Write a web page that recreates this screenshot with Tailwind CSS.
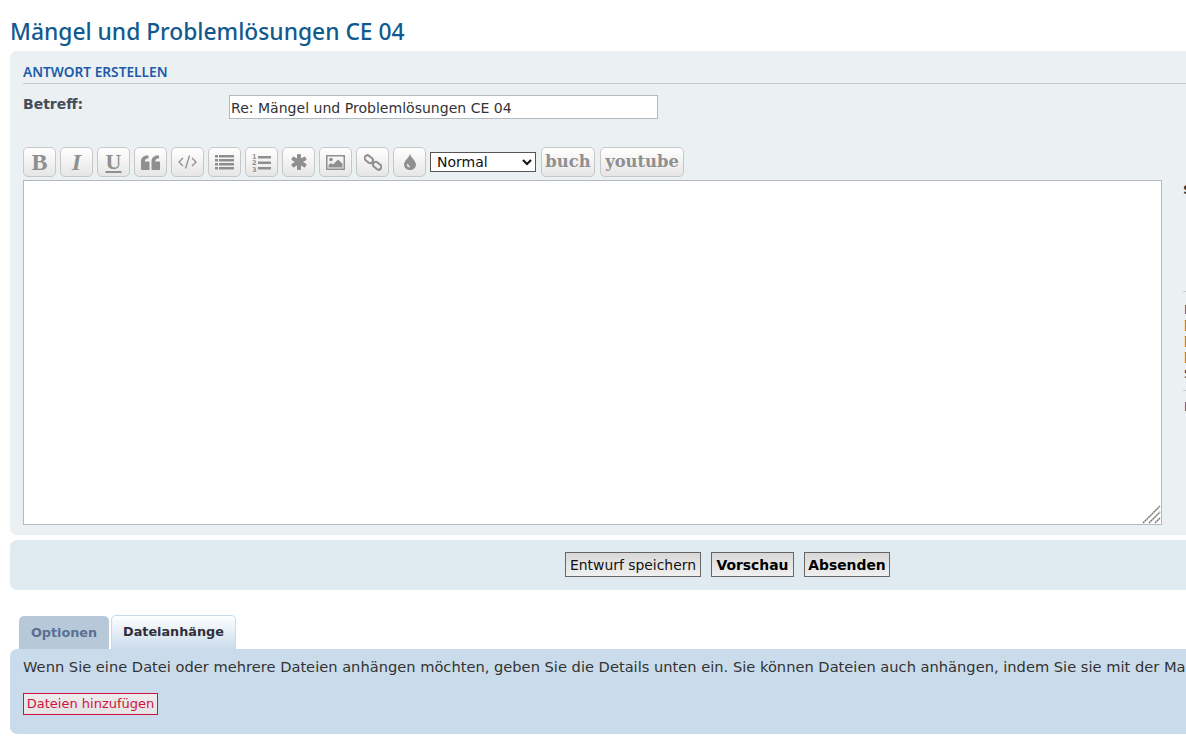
<!DOCTYPE html>
<html lang="de">
<head>
  <meta charset="UTF-8" />
  <title>Mängel und Problemlösungen CE 04</title>
  <script src="https://cdn.jsdelivr.net/npm/@tailwindcss/browser@4"></script>
</head>
<body class="bg-white overflow-hidden h-[736px] font-['DejaVu_Sans',sans-serif] text-[13px] text-[#333]">
<div class="w-[1500px] pl-[10px]">

  <!-- Title -->
  <h2 class="h-[51px] pt-[16px] text-[22.8px] leading-[32px] font-medium text-[#115a8e] font-['Noto_Sans',sans-serif]">Mängel und Problemlösungen CE 04</h2>

  <!-- Editor panel -->
  <div class="h-[484px] rounded-[7px] bg-[#ebf0f3] pl-[13px] pt-[12px]">
    <h3 class="h-[21px] border-b border-[#c4c9cd] text-[13.7px] leading-[17px] font-semibold text-[#1c5ba8] font-['Noto_Sans',sans-serif]">ANTWORT ERSTELLEN</h3>

    <div class="flex h-[63px] pt-[11px]">
      <label class="w-[206px] text-[14px] font-bold text-[#444c58] leading-[18px]">Betreff:</label>
      <input type="text" value="Re: Mängel und Problemlösungen CE 04" class="w-[429px] h-[24px] border border-[#b4b9bf] bg-white pl-[1px] pt-[1px] text-[14.05px] text-[#333] font-['DejaVu_Sans',sans-serif]" />
    </div>

    <div class="flex">
      <div class="w-[1139px] shrink-0">
        <!-- Toolbar -->
        <div class="flex items-center gap-[4px] h-[30px] text-[#8f8f8f]">
          <button class="w-[33px] h-[30px] flex items-center justify-center rounded-[5px] border border-[#c7c7c7] bg-gradient-to-b from-white to-[#e6e6e6] font-['Liberation_Serif',serif] font-bold text-[24px] leading-none">B</button>
          <button class="w-[33px] h-[30px] flex items-center justify-center rounded-[5px] border border-[#c7c7c7] bg-gradient-to-b from-white to-[#e6e6e6] font-['Liberation_Serif',serif] font-bold italic text-[24px] leading-none">I</button>
          <button class="w-[33px] h-[30px] flex items-center justify-center rounded-[5px] border border-[#c7c7c7] bg-gradient-to-b from-white to-[#e6e6e6] font-['Liberation_Serif',serif] font-bold underline underline-offset-2 text-[22px] leading-none">U</button>
          <button class="w-[33px] h-[30px] flex items-center justify-center rounded-[5px] border border-[#c7c7c7] bg-gradient-to-b from-white to-[#e6e6e6]">
            <svg width="19" height="15" viewBox="0 0 19 15" fill="currentColor"><path d="M8.500 15H1.200Q0 15 0 13.800V6.500C0 3 2.500 0.500 6 0.500H7.500V3.500H6.500C5 3.500 3.800 4.500 3.800 6.500H8.500ZM19 15H11.700Q10.500 15 10.500 13.800V6.500C10.500 3 13 0.500 16.500 0.500H18V3.500H17C15.500 3.500 14.300 4.500 14.300 6.500H19Z"/></svg>
          </button>
          <button class="w-[33px] h-[30px] flex items-center justify-center rounded-[5px] border border-[#c7c7c7] bg-gradient-to-b from-white to-[#e6e6e6]">
            <svg width="19" height="14" viewBox="0 0 19 14" fill="none" stroke="currentColor" stroke-width="1.300"><path d="M5 3L1 7L5 11M14 3L18 7L14 11M11.500 0.500L7.500 13.500"/></svg>
          </button>
          <button class="w-[33px] h-[30px] flex items-center justify-center rounded-[5px] border border-[#c7c7c7] bg-gradient-to-b from-white to-[#e6e6e6]">
            <svg width="19" height="15" viewBox="0 0 19 15" fill="currentColor"><rect x="0" y="0" width="3" height="2.500"/><rect x="4" y="0" width="15" height="2.500"/><rect x="0" y="4" width="3" height="2.500"/><rect x="4" y="4" width="15" height="2.500"/><rect x="0" y="8" width="3" height="2.500"/><rect x="4" y="8" width="15" height="2.500"/><rect x="0" y="12" width="3" height="2.500"/><rect x="4" y="12" width="15" height="2.500"/></svg>
          </button>
          <button class="w-[33px] h-[30px] flex items-center justify-center rounded-[5px] border border-[#c7c7c7] bg-gradient-to-b from-white to-[#e6e6e6]">
            <svg width="19" height="19" viewBox="0 0 19 19" fill="currentColor"><text x="0" y="5.500" font-size="6.500" font-weight="700" font-family="DejaVu Sans">1</text><text x="0" y="12" font-size="6.500" font-weight="700" font-family="DejaVu Sans">2</text><text x="0" y="18.500" font-size="6.500" font-weight="700" font-family="DejaVu Sans">3</text><rect x="6" y="3" width="13" height="2.500"/><rect x="6" y="8.500" width="13" height="2.500"/><rect x="6" y="14" width="13" height="2.500"/></svg>
          </button>
          <button class="w-[33px] h-[30px] flex items-center justify-center rounded-[5px] border border-[#c7c7c7] bg-gradient-to-b from-white to-[#e6e6e6]">
            <svg width="16" height="16" viewBox="0 0 16 16" fill="currentColor"><rect x="6" y="0" width="4" height="16" rx="1"/><rect x="6" y="0" width="4" height="16" rx="1" transform="rotate(60 8 8)"/><rect x="6" y="0" width="4" height="16" rx="1" transform="rotate(120 8 8)"/></svg>
          </button>
          <button class="w-[33px] h-[30px] flex items-center justify-center rounded-[5px] border border-[#c7c7c7] bg-gradient-to-b from-white to-[#e6e6e6]">
            <svg width="19" height="15" viewBox="0 0 19 15"><rect x="0.750" y="0.750" width="17.500" height="13.500" fill="none" stroke="currentColor" stroke-width="1.500"/><circle cx="5" cy="4.500" r="1.800" fill="currentColor"/><path d="M2.500 12.500V10L5 8L7 9.500L12 4.500L16.500 8.500V12.500Z" fill="currentColor"/></svg>
          </button>
          <button class="w-[33px] h-[30px] flex items-center justify-center rounded-[5px] border border-[#c7c7c7] bg-gradient-to-b from-white to-[#e6e6e6]">
            <svg width="18" height="17" viewBox="0 0 18 17" fill="none" stroke="currentColor" stroke-width="2"><rect x="0.500" y="2.500" width="9" height="5.500" rx="2.700" transform="rotate(40 5 5)"/><rect x="8.500" y="9" width="9" height="5.500" rx="2.700" transform="rotate(40 13 12)"/></svg>
          </button>
          <button class="w-[33px] h-[30px] flex items-center justify-center rounded-[5px] border border-[#c7c7c7] bg-gradient-to-b from-white to-[#e6e6e6]">
            <svg width="12" height="16" viewBox="0 0 12 16" fill="currentColor"><path fill-rule="evenodd" d="M6 0C7 3.500 12 7 12 10.500A6 5.500 0 0 1 0 10.500C0 7 5 3.500 6 0ZM3 10Q2.800 13 5.500 13.500L6 12.300Q4.500 12 4.300 10Z"/></svg>
          </button>
          <select class="w-[106px] h-[20px] border border-[#555] bg-white pl-[2px] text-[14px] text-[#111]">
            <option>Normal</option>
          </select>
          <button class="w-[54px] h-[30px] ml-[1px] pt-[1px] rounded-[5px] border border-[#c7c7c7] bg-gradient-to-b from-white to-[#e6e6e6] font-['DejaVu_Serif',serif] font-bold text-[16.4px] leading-none">buch</button>
          <button class="w-[84px] h-[30px] ml-[1px] pt-[1px] rounded-[5px] border border-[#c7c7c7] bg-gradient-to-b from-white to-[#e6e6e6] font-['DejaVu_Serif',serif] font-bold text-[16.4px] leading-none">youtube</button>
        </div>
        <!-- Textarea -->
        <div class="relative mt-[3px] h-[345px] border border-[#b4b9bf] bg-white">
          <svg class="absolute right-0 bottom-0" width="20" height="20" viewBox="0 0 20 20" stroke="#777" stroke-width="1.500" stroke-dasharray="2 0.500"><path d="M2 19L19 2M8 19L19 8M14 19L19 14"/></svg>
        </div>
      </div>
      <!-- Sidebar, runs off the right edge -->
      <div class="ml-[21px] pt-[34px] w-[200px]">
        <div class="font-bold text-[#333] leading-[18px]">Smilies</div>
        <div class="mt-[92px] border-t border-[#c4c9cd] pt-[10px] text-[12px] leading-[16px] pl-[1px]">
          <div class="text-[#1c4a7a]">BBCode ist eingeschaltet</div>
          <div class="text-[#b5651d]">[img] ist eingeschaltet</div>
          <div class="text-[#b5651d]">[flash] ist ausgeschaltet</div>
          <div class="text-[#b5651d]">[url] ist eingeschaltet</div>
          <div class="text-[#333]">Smilies sind eingeschaltet</div>
        </div>
        <div class="mt-[8px] border-t border-[#c4c9cd] pt-[8px] pl-[1px] text-[12px] leading-[16px] text-[#1c4a7a]">Beitragsrückschau</div>
      </div>
    </div>
  </div>

  <!-- Submit buttons -->
  <div class="mt-[5px] h-[50px] pb-[1px] rounded-[7px] bg-[#e0eaf1] flex items-center gap-[10px] pl-[555px]">
    <button class="w-[136px] h-[25px] pt-[1px] border border-[#666] bg-gradient-to-b from-[#d8d8d8] to-[#f0f0f0] text-[13.9px] text-[#111]">Entwurf speichern</button>
    <button class="w-[83px] h-[25px] pt-[1px] border border-[#666] bg-gradient-to-b from-[#d8d8d8] to-[#f0f0f0] text-[13.9px] font-bold text-[#000]">Vorschau</button>
    <button class="w-[86px] h-[25px] pt-[1px] border border-[#666] bg-gradient-to-b from-[#d8d8d8] to-[#f0f0f0] text-[13.9px] font-bold text-[#000]">Absenden</button>
  </div>

  <!-- Tabs -->
  <div class="flex items-end gap-[2px] mt-[25px] pl-[9px] h-[34px]">
    <div class="w-[90px] h-[33px] rounded-t-[5px] bg-[#b7c9d9] text-center text-[12.8px] font-bold text-[#5c6f92] leading-[33px]">Optionen</div>
    <div class="w-[125px] h-[34px] rounded-t-[5px] border border-b-0 border-[#c7dbee] bg-gradient-to-b from-white to-[#cadceb] text-center text-[12.8px] font-bold text-[#2f2f3a] leading-[32px]">Dateianhänge</div>
  </div>

  <!-- Attachments panel -->
  <div class="h-[85px] rounded-[7px] bg-[#cadceb] pl-[13px] pt-[9px]">
    <p class="leading-[18px] text-[14.65px] whitespace-nowrap text-[#333]">Wenn Sie eine Datei oder mehrere Dateien anhängen möchten, geben Sie die Details unten ein. Sie können Dateien auch anhängen, indem Sie sie mit der Maus in dieses Feld ziehen.</p>
    <button class="block mt-[17px] w-[135px] h-[22px] border border-[#d31141] bg-gradient-to-b from-[#ececec] to-[#e4e4e4] text-[13px] text-[#d31141]">Dateien hinzufügen</button>
  </div>
</div>
</body>
</html>
